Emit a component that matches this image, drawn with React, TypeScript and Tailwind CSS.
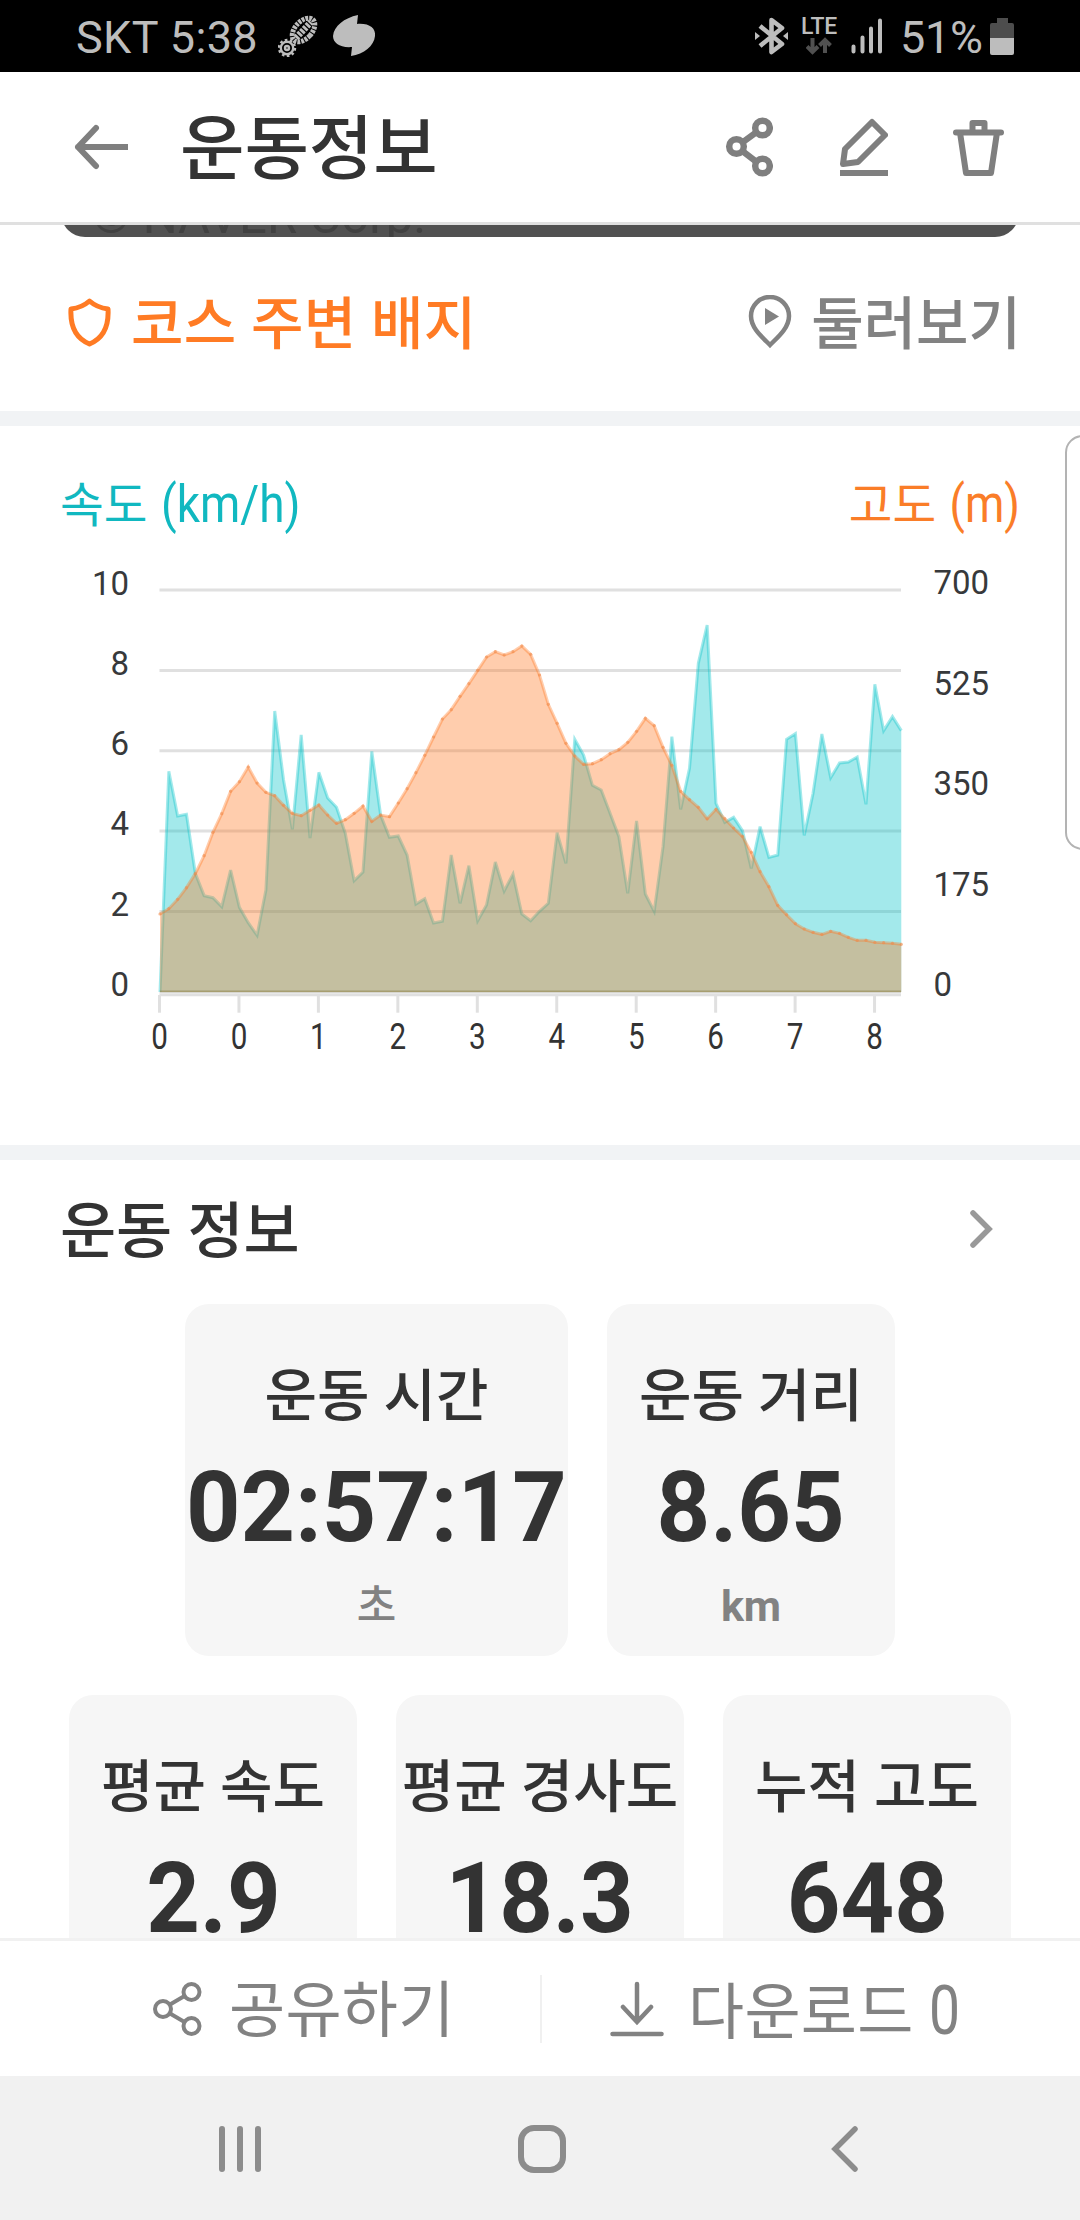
// plot geometry, in svg units
const LEFT = 160;
const STEP = 8.825;
const BASE = 572;

// heights above the base line, one sample every 1/9 of a tick
const speed = [
  0, 662, 528, 533, 356, 289, 283, 256, 366, 254, 208, 170, 306, 843, 636, 488,
  771, 462, 659, 582, 554, 476, 334, 360, 722, 531, 464, 468, 411, 264, 280,
  207, 212, 411, 266, 379, 214, 261, 390, 303, 354, 234, 214, 242, 266, 478,
  386, 758, 711, 620, 606, 536, 466, 296, 513, 294, 242, 436, 766, 548, 671,
  986, 1101, 566, 509, 524, 484, 371, 496, 404, 411, 758, 775, 470, 596, 774,
  643, 687, 690, 705, 563, 923, 784, 826, 784,
];

const altitude = [
  234, 250, 278, 313, 355, 409, 479, 535, 602, 631, 675, 627, 599, 589, 560,
  536, 529, 545, 561, 531, 506, 517, 536, 558, 512, 531, 526, 567, 610, 658,
  710, 765, 819, 847, 887, 925, 965, 1005, 1021, 1011, 1021, 1038, 1013, 951,
  863, 806, 746, 708, 683, 685, 697, 715, 727, 749, 782, 821, 799, 734, 680,
  602, 577, 554, 520, 548, 520, 492, 467, 419, 361, 316, 260, 232, 205, 189,
  179, 173, 182, 176, 164, 155, 155, 149, 148, 146, 143,
];

const toPoints = (data: number[]) =>
  data.map((v, i) => `${LEFT + i * STEP},${BASE - v / 3}`).join(" ");

const toArea = (data: number[]) =>
  `${LEFT},${BASE} ${toPoints(data)} ${LEFT + (data.length - 1) * STEP},${BASE}`;

const gridLines = [170, 250.4, 330.7, 411, 491.4, 571.5];
const speedLabels = ["10", "8", "6", "4", "2", "0"];
const altitudeLabels = ["700", "525", "350", "175", "0"];
const tickLabels = ["0", "0", "1", "2", "3", "4", "5", "6", "7", "8"];

function StatusBar() {
  return (
    <div className="h-[72px] shrink-0 bg-black text-[#bdbdbd] flex items-center pl-[76px] pr-[66px]">
      <span className="text-[45px] leading-none font-[Roboto] tracking-[0.4px] w-[202px] pt-[3px] whitespace-nowrap">
        SKT 5:38
      </span>
      <svg width="40" height="42" viewBox="0 0 40 42" fill="none">
        <g stroke="#bdbdbd" strokeWidth="2.4">
          <ellipse
            cx="25.500"
            cy="15"
            rx="8.500"
            ry="14"
            transform="rotate(42 25.500 15)"
            strokeDasharray="2.800 1"
            strokeWidth="5"
          />
          <path d="M18 23L33 7" strokeWidth="6.500" strokeDasharray="2.800 1.200" />
          <circle cx="9" cy="33" r="6.200" />
          <circle cx="9" cy="33" r="8" strokeDasharray="2.600 2.430" />
          <circle cx="9" cy="33" r="2" />
        </g>
      </svg>
      <svg className="ml-[15px]" width="43" height="42" viewBox="0 0 43 42">
        <path
          d="M25 0L24 9C36 8 43 13 42 21C41 31 31 39 18 41L19 32C7 33 0 28 0 21C1 11 11 3 25 0Z"
          fill="#bdbdbd"
        />
      </svg>

      <svg className="ml-auto" width="33" height="40" viewBox="0 0 33 40">
        <path
          d="M5 10L27 28L16.500 36V4L27 12L5 30"
          fill="none"
          stroke="#bdbdbd"
          strokeWidth="4.600"
          strokeLinejoin="round"
        />
        <path d="M0 16L5 20L0 24ZM33 16L28 20L33 24Z" fill="#bdbdbd" />
      </svg>
      <div className="ml-[13px] w-[36px] flex flex-col items-center">
        <span className="text-[23px] leading-[19px] font-medium font-[Roboto] tracking-[-0.2px]">
          LTE
        </span>
        <svg className="mt-px" width="26" height="18" viewBox="0 0 26 18">
          <path
            d="M6.500 1V14M1 9.500L6.500 15L12 9.500M19 16V4M13.500 8.500L19 3L24.500 8.500"
            fill="none"
            stroke="#505050"
            strokeWidth="4"
          />
        </svg>
      </div>
      <svg className="ml-[14px]" width="33" height="36" viewBox="0 0 33 36">
        <path
          d="M2.500 28.500V33.500M11.500 19.500V33.500M20 10.500V33.500M29 2.500V33.500"
          stroke="#bdbdbd"
          strokeWidth="4"
          strokeLinecap="round"
        />
      </svg>
      <span className="ml-[16px] w-[82px] pt-[3px] text-[45px] leading-none font-[Roboto] tracking-[-0.3px] whitespace-nowrap">
        51%
      </span>
      <svg className="ml-[8px]" width="24" height="37" viewBox="0 0 24 37">
        <path d="M7 0H18V5H22Q24 5 24 7V20H0V7Q0 5 2 5H7Z" fill="#4d4d4d" />
        <path d="M0 20H24V35Q24 37 22 37H2Q0 37 0 35Z" fill="#bdbdbd" />
      </svg>
    </div>
  );
}

function Header() {
  return (
    <header className="h-[153px] shrink-0 bg-white border-b-[3px] border-[#e0e0e0] flex items-center pl-[74px] pr-[76px]">
      <svg width="54" height="46" viewBox="0 0 54 46" fill="none">
        <path
          d="M22 4L4 23L22 42M4 23H53"
          stroke="#7f7f7f"
          strokeWidth="6"
          strokeLinecap="round"
          strokeLinejoin="round"
        />
      </svg>
      <h1 className="ml-[52px] pt-[6px] text-[70px] leading-none font-medium text-[#333]">
        운동정보
      </h1>
      <svg
        className="ml-auto"
        width="48"
        height="60"
        viewBox="0 0 48 60"
        fill="none"
        stroke="#7f7f7f"
        strokeWidth="6.500"
      >
        <circle cx="37.500" cy="11" r="7.300" />
        <circle cx="37.500" cy="49" r="7.300" />
        <circle cx="11.500" cy="29.500" r="7.300" />
        <path d="M18 25L31 15.500M18 34.500L31 44.500" />
      </svg>
      <svg
        className="ml-[66px]"
        width="49"
        height="58"
        viewBox="0 0 49 58"
        fill="none"
        stroke="#7f7f7f"
        strokeWidth="6"
        strokeLinejoin="round"
      >
        <path d="M33 4L46 17L19 44L4 46L6 31Z" />
        <path d="M1 55H49" />
      </svg>
      <svg
        className="ml-[64px]"
        width="52"
        height="58"
        viewBox="0 0 52 58"
        fill="none"
        stroke="#7f7f7f"
        strokeWidth="6"
        strokeLinejoin="round"
      >
        <path d="M4 14.500H49" strokeLinecap="round" />
        <path d="M8 14.500L14 55H39L45 14.500" />
        <path d="M20.500 13V5H32.500V13" />
      </svg>
    </header>
  );
}

function Chart() {
  return (
    <section className="relative h-[719px] shrink-0 bg-white">
      <div className="absolute top-[9px] -right-[20px] w-[35px] h-[415px] rounded-[20px] border-2 border-[#b3b3b3]" />
      <div className="flex justify-between pl-[60px] pr-[60px] pt-[54px] h-[120px] text-[47.5px] leading-[49px] whitespace-nowrap">
        <span className="text-[#11b8c0]">
          속도{" "}
          <span className="inline-block ml-[2px] origin-left scale-x-[0.900] text-[51px] leading-[49px]">
            (km/h)
          </span>
        </span>
        <span className="text-[#fa7d28]">
          고도{" "}
          <span className="inline-block -ml-[8px] origin-right scale-x-[0.880] text-[51px] leading-[49px]">
            (m)
          </span>
        </span>
      </div>
      <svg width="1080" height="520" viewBox="0 126 1080 520" className="block">
        <g stroke="#e0e0e0" strokeWidth="3">
          {gridLines.map((y) => (
            <path key={y} d={`M${LEFT - 0.5} ${y}H901`} />
          ))}
          <path d={`M${LEFT - 0.5} 574.700H901`} />
          {tickLabels.map((_, i) => (
            <path key={i} d={`M${159.5 + i * 79.45} 575V592.700`} />
          ))}
        </g>
        <g fillOpacity="0.360" strokeOpacity="0.360" strokeWidth="3">
          <polygon points={toArea(speed)} fill="#00c2c8" />
          <polyline points={toPoints(speed)} stroke="#00c2c8" fill="none" />
          <polygon points={toArea(altitude)} fill="#ff741b" />
          <polyline points={toPoints(altitude)} stroke="#ff741b" fill="none" />
          <path d="M160 571.500H901" stroke="#8a7b33" strokeWidth="1.500" />
        </g>
        <g fill="#f08a4b" fillOpacity="0.600">
          {altitude.map((v, i) => (
            <circle key={i} cx={LEFT + i * STEP} cy={BASE - v / 3} r="1.600" />
          ))}
        </g>
        <g fill="#37393b" fontFamily="Roboto" fontSize="33">
          {speedLabels.map((label, i) => (
            <text key={label} x="129" y={175 + i * 80.15} textAnchor="end">
              {label}
            </text>
          ))}
          {altitudeLabels.map((label, i) => (
            <text key={label} x="933.500" y={174 + i * 100.5}>
              {label}
            </text>
          ))}
        </g>
        <g fill="#333" fontFamily="Roboto" fontSize="37" textAnchor="middle">
          {tickLabels.map((label, i) => (
            <text
              key={i}
              transform={`translate(${159.5 + i * 79.45} 629) scale(0.800 1)`}
            >
              {label}
            </text>
          ))}
        </g>
      </svg>
    </section>
  );
}

type StatProps = {
  label: string;
  value: string;
  unit?: string;
  wide?: boolean;
};

function Stat({ label, value, unit, wide }: StatProps) {
  return (
    <div
      className={`${wide ? "w-[383px]" : "w-[288px]"} h-[352px] shrink-0 rounded-[24px] bg-[#f6f6f6] text-[#333] flex flex-col items-center pt-[64px]`}
    >
      <span className="text-[57px] leading-[57px] font-medium whitespace-nowrap">
        {label}
      </span>
      <span
        className={`${wide ? "scale-x-[0.970]" : "scale-x-[0.955]"} mt-[34px] text-[98px] leading-[98px] font-bold font-[Roboto] whitespace-nowrap`}
      >
        {value}
      </span>
      {unit && (
        <span
          className={`${wide ? "font-medium" : "font-bold"} mt-[28px] text-[43px] leading-[42px] text-[#828282]`}
        >
          {unit}
        </span>
      )}
    </div>
  );
}

function BottomBar() {
  return (
    <div className="h-[138px] shrink-0 bg-white border-t-[3px] border-[#f1f1f1] flex items-center text-[61px] leading-none text-[#828282]">
      <div className="w-[540px] flex items-center pl-[153px]">
        <svg
          width="49"
          height="56"
          viewBox="0 0 49 56"
          fill="none"
          stroke="#828282"
          strokeWidth="4"
        >
          <circle cx="38.500" cy="11" r="8" />
          <circle cx="38.500" cy="45" r="8" />
          <circle cx="10" cy="28" r="8" />
          <path d="M17 23.500L31.500 15M17 32.500L31.500 41" />
        </svg>
        <span className="ml-[27px] pt-[6px] tracking-[0.3px]">공유하기</span>
      </div>
      <div className="w-[2px] h-[68px] bg-[#f0f0f0]" />
      <div className="flex items-center pl-[68px]">
        <svg
          width="54"
          height="56"
          viewBox="0 0 54 56"
          fill="none"
          stroke="#828282"
          strokeWidth="4.500"
          strokeLinecap="round"
        >
          <path d="M27 3V40M13 26L27 41L41 26M2.500 53H51.500" />
        </svg>
        <span className="ml-[24px] pt-[6px] whitespace-nowrap tracking-[0.3px]">
          다운로드{" "}
          <span className="inline-block origin-left scale-x-[0.800] text-[69px] leading-[61px]">
            0
          </span>
        </span>
      </div>
    </div>
  );
}

function NavBar() {
  return (
    <nav className="h-[144px] shrink-0 bg-[#f1f1f1] flex items-center pl-[219px] pt-[2px]">
      <svg width="42" height="46" viewBox="0 0 42 46">
        <path
          d="M3 3V43M21 3V43M39 3V43"
          stroke="#8c8c8c"
          strokeWidth="6"
          strokeLinecap="round"
        />
      </svg>
      <svg
        className="ml-[257px]"
        width="48"
        height="48"
        viewBox="0 0 48 48"
        fill="none"
      >
        <rect
          x="3"
          y="3"
          width="42"
          height="42"
          rx="13"
          stroke="#8c8c8c"
          strokeWidth="6"
        />
      </svg>
      <svg
        className="ml-[265px]"
        width="27"
        height="46"
        viewBox="0 0 27 46"
        fill="none"
      >
        <path
          d="M24 3L4 23L24 43"
          stroke="#8c8c8c"
          strokeWidth="5.500"
          strokeLinecap="round"
        />
      </svg>
    </nav>
  );
}

export default function App() {
  return (
    <div className="w-[1080px] h-[2220px] flex flex-col overflow-hidden bg-white font-['Roboto','Noto_Sans_CJK_KR',sans-serif]">
      <StatusBar />
      <Header />
      <main className="flex-1 min-h-0 overflow-hidden flex flex-col">
        {/* Bottom edge of the map */}
        <div className="mx-[61px] h-[12px] shrink-0 overflow-hidden flex items-end">
          <div className="h-[60px] w-full shrink-0 rounded-b-[24px] bg-[#515151] overflow-hidden pl-[31px] pt-[15px] text-[49px] leading-[50px] text-[#414141]">
            © NAVER Corp.
          </div>
        </div>

        {/* Course links */}
        <div className="h-[174px] shrink-0 flex items-center justify-between pl-[68px] pr-[59px] pb-[4px] text-[57px] leading-none font-medium">
          <div className="flex items-center text-[#ff7b24]">
            <svg width="43" height="51" viewBox="0 0 43 51" fill="none">
              <path
                d="M21.500 4C26 8 32 11 40 12C41 29 36 41 21.500 47C7 41 2 29 3 12C11 11 17 8 21.500 4Z"
                stroke="#ff7b24"
                strokeWidth="5"
                strokeLinejoin="round"
              />
            </svg>
            <span className="ml-[20px] pt-[4px] tracking-[0.3px]">
              코스 주변 배지
            </span>
          </div>
          <div className="flex items-center text-[#828282]">
            <svg width="44" height="54" viewBox="0 0 44 54" fill="none">
              <path
                d="M22 50C14 42 3 33 3 21A19 19 0 0 1 41 21C41 33 30 42 22 50Z"
                stroke="#828282"
                strokeWidth="4.500"
              />
              <path d="M17 13V30L31 21.500Z" fill="#828282" />
            </svg>
            <span className="ml-[19px] pt-[4px]">둘러보기</span>
          </div>
        </div>
        <div className="h-[15px] shrink-0 bg-[#f1f3f5]" />
        <Chart />
        <div className="h-[15px] shrink-0 bg-[#f1f3f5]" />

        {/* Workout summary */}
        <section className="shrink-0">
          <div className="h-[144px] flex items-center justify-between pl-[60px] pr-[87px] pb-[6px]">
            <h2 className="pt-[7px] text-[61px] leading-none font-medium text-[#333]">
              운동 정보
            </h2>
            <svg width="24" height="38" viewBox="0 0 24 38" fill="none">
              <path
                d="M4 3L20 19L4 35"
                stroke="#999"
                strokeWidth="5.500"
                strokeLinecap="round"
              />
            </svg>
          </div>
          <div className="flex flex-col gap-[39px]">
            <div className="flex justify-center gap-[39px]">
              <Stat label="운동 시간" value="02:57:17" unit="초" wide />
              <Stat label="운동 거리" value="8.65" unit="km" />
            </div>
            <div className="flex justify-center gap-[39px]">
              <Stat label="평균 속도" value="2.9" />
              <Stat label="평균 경사도" value="18.3" />
              <Stat label="누적 고도" value="648" />
            </div>
          </div>
        </section>
      </main>
      <BottomBar />
      <NavBar />
    </div>
  );
}
